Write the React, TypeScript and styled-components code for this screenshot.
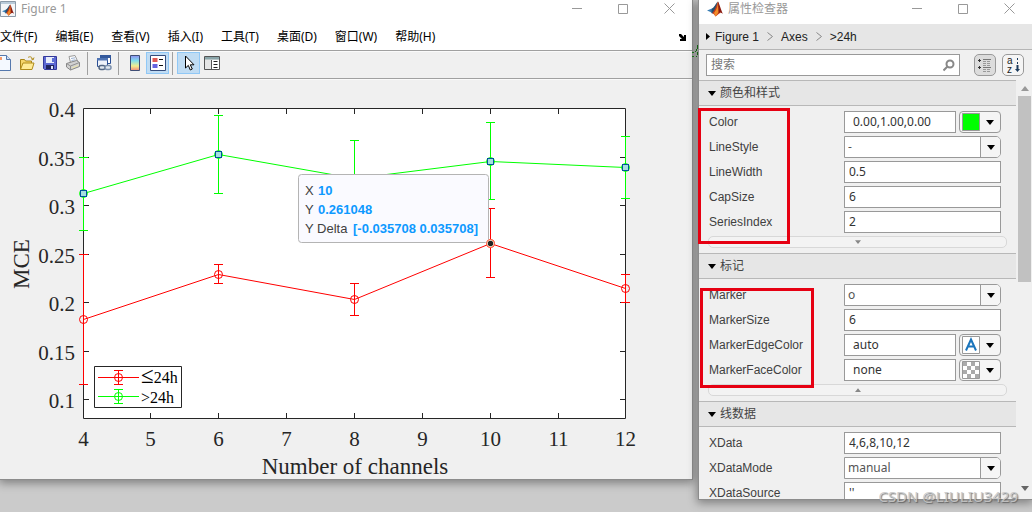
import React from "react";
import styled, { createGlobalStyle } from "styled-components";

const sans = `"Noto Sans", "Noto Sans CJK SC", sans-serif`;
const arial = `"Liberation Sans", "Noto Sans CJK SC", sans-serif`;
const serif = `"Liberation Serif", serif`;

const GlobalStyle = createGlobalStyle`
  * { box-sizing: border-box; }
  body { margin: 0; background: #cbcbcb; overflow: hidden; }
  button, input, select { margin: 0; padding: 0; font: inherit; color: inherit; }
  svg { display: block; }
`;

const Desktop = styled.div`
  position: relative;
  display: flex;
  align-items: flex-start;
  gap: 5px;
  min-height: 100vh;
  overflow: hidden;
  font: 12px/16px ${sans};
  color: #000;
`;

const FigureWindow = styled.main`
  flex: 1;
  min-width: 0;
  background: #f0f0f0;
  border: solid #8c8c8c;
  border-width: 0 1px 1px 0;
  box-shadow: 0 2px 9px 1px rgba(0, 0, 0, 0.38);
`;

const InspectorWindow = styled.aside`
  position: relative;
  flex: none;
  width: 334px;
  height: calc(100vh - 12px);
  display: flex;
  flex-direction: column;
  background: #f0f0f0;
  border: solid #8c8c8c;
  border-width: 0 0 1px 1px;
  box-shadow: 0 2px 9px 1px rgba(0, 0, 0, 0.38);
`;

const TitleBar = styled.header<{ $indent: number }>`
  flex: none;
  display: flex;
  align-items: center;
  gap: 5px;
  height: 24px;
  padding: 0 0 7px ${(p) => p.$indent}px;
  background: #fff;
  color: #999;
`;

const Title = styled.h1`
  flex: 1;
  margin: 0;
  font-size: 12px;
  font-weight: 400;
`;

const WindowButton = styled.button`
  display: grid;
  place-items: center;
  width: 46px;
  height: 17px;
  margin-left: -5px;
  border: 0;
  background: none;
`;

const MenuBar = styled.nav`
  display: flex;
  align-items: center;
  gap: 18px;
  height: 27px;
  background: #fff;
  border-bottom: 1px solid #a0a0a0;
`;

const MenuItem = styled.button`
  border: 0;
  background: none;
  white-space: nowrap;
`;

const DockButton = styled.button`
  margin: 0 5px 0 auto;
  border: 0;
  background: none;
`;

const Toolbar = styled.div`
  display: flex;
  height: 28px;
  padding: 1px 0 3px;
  border-bottom: 1px solid #a0a0a0;
  box-shadow: inset 0 1px #fafafa, 0 1px #fafafa;
`;

const ToolGroup = styled.div`
  display: flex;
  &:first-child { margin-left: -8px; }
  & + & { margin-left: 3px; padding-left: 4px; border-left: 1px solid #a0a0a0; }
`;

const ToolButton = styled.button<{ $on?: boolean }>`
  display: grid;
  place-items: center;
  width: 23px;
  height: 22px;
  border: 1px solid ${(p) => (p.$on ? "#90c8f6" : "transparent")};
  background: ${(p) => (p.$on ? "#c0dcf3" : "none")};
`;

const Plot = styled.svg`
  width: 100%;
  height: auto;
`;

const Breadcrumb = styled.nav`
  flex: none;
  display: flex;
  align-items: center;
  gap: 8px;
  height: 26px;
  padding-left: 7px;
  background: #e6e6e6;
  border-bottom: 1px solid #b5b5b5;
  font-family: ${arial};
`;

const Crumb = styled.a`
  color: #222;
  text-decoration: none;
  &:first-of-type { margin-left: -3px; }
`;

const SearchRow = styled.div`
  flex: none;
  display: flex;
  gap: 6px;
  padding: 4px 8px 4px 7px;
`;

const SearchBox = styled.label`
  flex: 1;
  display: flex;
  align-items: center;
  height: 22px;
  margin-right: 8px;
  padding: 0 4px;
  background: #fff;
  border: 1px solid #999;
`;

const SearchInput = styled.input`
  flex: 1;
  min-width: 0;
  border: 0;
  outline: 0;
  background: none;
  color: #444;
  &::placeholder { color: #777; opacity: 1; }
`;

const ModeButton = styled.button<{ $on?: boolean }>`
  display: grid;
  place-items: center;
  width: 22px;
  height: 22px;
  border: 1px solid #999;
  border-radius: 5px;
  background: ${(p) => (p.$on ? "#dcdcdc" : "#f5f5f5")};
`;

const Body = styled.div`
  flex: 1;
  min-height: 0;
  display: flex;
`;

const Sections = styled.div`
  flex: 1;
  overflow: hidden;
`;

const SectionHead = styled.h2`
  display: flex;
  align-items: center;
  gap: 4px;
  height: 26px;
  margin: 0;
  padding-left: 9px;
  border: solid #b8b8b8;
  border-width: 1px 0;
  background: #e6e6e6;
  color: #444;
  font-size: 12px;
  font-weight: 400;
`;

const Rows = styled.div`
  display: flex;
  flex-direction: column;
  gap: 3px;
  padding: 5px 9px;
`;

const Row = styled.div`
  display: flex;
  align-items: center;
  height: 22px;
  padding-right: 6px;
`;

const RowLabel = styled.label`
  flex: 1;
  padding-left: 1px;
  font-family: ${arial};
  color: #404040;
`;

const Field = styled.div`
  position: relative;
  display: flex;
  gap: 3px;
  width: 157px;
  height: 22px;
`;

const ValueInput = styled.input<{ $inset?: boolean }>`
  flex: 1;
  min-width: 0;
  padding: 0 ${(p) => (p.$inset ? 8 : 4)}px;
  border: 1px solid #999;
  background: #fff;
  color: #333;
`;

const ValueSelect = styled.select`
  flex: 1;
  appearance: none;
  padding: 0 24px 0 3px;
  border: 1px solid #999;
  border-radius: 0 5px 5px 0;
  background: #fff;
  color: #555;
`;

const SelectArrow = styled.span`
  position: absolute;
  top: 1px;
  right: 1px;
  bottom: 1px;
  display: grid;
  place-items: center;
  width: 20px;
  border-left: 1px solid #999;
  border-radius: 0 4px 4px 0;
  background: #f5f5f5;
  pointer-events: none;
`;

const SwatchButton = styled.button`
  display: flex;
  align-items: center;
  gap: 6px;
  width: 42px;
  padding-left: 2px;
  border: 1px solid #999;
  border-radius: 4px;
  background: #f5f5f5;
`;

const Expander = styled.button`
  display: grid;
  place-items: center;
  height: 12px;
  border: 1px solid #d8d8d8;
  border-radius: 5px;
  background: #f3f3f3;
`;

const ScrollTrack = styled.div`
  flex: none;
  display: flex;
  flex-direction: column;
  align-items: center;
  width: 16px;
  padding: 6px 1px 8px 2px;
  background: #f0f0f0;
`;

const ScrollThumb = styled.div`
  width: 13px;
  height: 46%;
  margin: 5px 0 auto;
  background: #c1c1c1;
`;

const Highlight = styled.div<{ $x: number; $y: number; $w: number; $h: number }>`
  position: absolute;
  left: ${(p) => p.$x}px;
  top: ${(p) => p.$y}px;
  width: ${(p) => p.$w}px;
  height: ${(p) => p.$h}px;
  border: 3px solid #e60012;
  pointer-events: none;
`;

const Watermark = styled.div`
  position: absolute;
  right: 14px;
  bottom: 5px;
  font-size: 15px;
  line-height: 22px;
  color: rgba(200, 200, 200, 0.9);
  text-shadow: 1px 1px 1px rgba(90, 90, 90, 0.8);
  pointer-events: none;
`;

const BackgroundMark = styled.svg`
  position: absolute;
  right: 334px;
  top: 44px;
`;

const Caret = ({ color = "#000", up = false, w = 8 }) => (
  <svg width={w} height={w / 2 + 1} viewBox="0 0 8 5">
    <path d={up ? "M0 5h8L4 0z" : "M0 0h8L4 5z"} fill={color} />
  </svg>
);

const MatlabMark = () => (
  <>
    <path d="M0 9.5 5 7.5 7.5 9.5 5 12.5 3.5 11z" fill="#3b7fb5" />
    <path d="M5 7.5C7.500 6.500 8.500 2.500 11 .5L8.500 10 5 12.500 4.500 10z" fill="#25506f" />
    <path d="M11 .5C9 5 8 9 5 12.500 6.500 12 7.500 14 8.500 15.500 10.500 14.500 11.500 12 13.500 12Z" fill="#c3391b" />
    <path d="M11 .5C12.500 3 14 9 16 13 14 11.500 12.500 11 11 12.500z" fill="#8b1c12" />
    <path d="M11 .5C11 5 9.500 9 7 12L8.500 15.500C10 14 10.500 12 11.500 11.500Z" fill="#f28c28" />
  </>
);

const WindowControls = () => (
  <>
    <WindowButton aria-label="最小化">
      <svg width="10" height="11"><path d="M0 5.500h10" stroke="#999" /></svg>
    </WindowButton>
    <WindowButton aria-label="最大化">
      <svg width="10" height="10"><path d="M.5.5h9v9h-9z" stroke="#999" fill="none" /></svg>
    </WindowButton>
    <WindowButton aria-label="关闭">
      <svg width="11" height="11"><path d="M.5.5l10 10M10.500.5l-10 10" stroke="#999" /></svg>
    </WindowButton>
  </>
);

const menus = ["文件(F)", "编辑(E)", "查看(V)", "插入(I)", "工具(T)", "桌面(D)", "窗口(W)", "帮助(H)"];

const tools: { name: string; on?: boolean; icon: React.ReactNode }[][] = [
  [
    {
      name: "新建",
      icon: (
        <>
          <path d="M1.500.5h9l4 4v11h-13z" fill="#f4f9ff" stroke="#5578ad" />
          <path d="M10.500.5v4h4" fill="#cfdff4" stroke="#5578ad" />
          <path d="M2 2h4v3H2z" fill="#f49a6a" />
        </>
      ),
    },
    {
      name: "打开",
      icon: (
        <>
          <path d="M1.500 14.500v-10h4l1 1.500h6v3" fill="#f6d66b" stroke="#a98416" />
          <path d="M1.500 14.500l2.500-6.500h11l-2 6.500z" fill="#ffeb96" stroke="#b08c1b" />
          <path d="M9 2.500c2-1.500 4-.5 4.500 1.500M12 3.500l2 1.500 1-2.500" fill="none" stroke="#b08c1b" />
        </>
      ),
    },
    {
      name: "保存",
      icon: (
        <>
          <path d="M1.500 1.500h13v13h-12l-1-1z" fill="#5c68d2" stroke="#34399a" />
          <path d="M4 2h8v6H4z" fill="#e8edfb" />
          <path d="M10 3h2v4h-2z" fill="#5c6fd3" />
          <path d="M4 10h8v4H4z" fill="#20245c" />
          <path d="M9 11h2v3H9z" fill="#dfe5fa" />
        </>
      ),
    },
    {
      name: "打印",
      icon: (
        <>
          <path d="M5.500 7.500L4 1.500l6-1 2.500 5.500z" fill="#fff" stroke="#999" />
          <path d="M6 3.500l4-.7M6.500 5.500l4-.7" stroke="#9bb1d1" />
          <path d="M1.500 8.500l10-3 3 2v4l-9 3.500-4-3z" fill="#d2d2d2" stroke="#888" />
          <path d="M1.500 8.500l4 2.500 9-3.500M5.500 11v4" fill="none" stroke="#909090" />
          <path d="M7 13l6-2.500" stroke="#eee7a8" />
        </>
      ),
    },
  ],
  [
    {
      name: "链接绘图",
      icon: (
        <>
          <path d="M4.500.5h10v8h-10z" fill="#fff" stroke="#2a4f94" />
          <path d="M4 0h11v3H4z" fill="#34599c" />
          <path d="M1.500 3.500h10v8h-10z" fill="#eef2fa" stroke="#2a4f94" />
          <path d="M1 3h11v2.500H1z" fill="#5075b5" />
          <rect x="3" y="10.500" width="6" height="4" rx="2" fill="#dfe6ef" stroke="#536784" strokeWidth="1.500" />
          <rect x="9" y="10.500" width="6" height="4" rx="2" fill="#dfe6ef" stroke="#7e92ae" strokeWidth="1.500" />
        </>
      ),
    },
  ],
  [
    {
      name: "插入颜色栏",
      icon: (
        <>
          <defs>
            <linearGradient id="bar" x1="0" y1="0" x2="0" y2="1">
              <stop offset="0" stopColor="#8f8df0" />
              <stop offset=".35" stopColor="#7fe0ee" />
              <stop offset=".7" stopColor="#f3ef8e" />
              <stop offset="1" stopColor="#f08a7c" />
            </linearGradient>
          </defs>
          <path d="M3.500.5h9v15h-9z" fill="url(#bar)" stroke="#3f4f76" />
        </>
      ),
    },
    {
      name: "插入图例",
      on: true,
      icon: (
        <>
          <path d="M.5.5h15v15H.5z" fill="#fff" stroke="#344c7c" />
          <path d="M2.500 3h5v4h-5z" fill="#e05a55" />
          <path d="M2.500 9h5v4h-5z" fill="#6663e0" />
          <path d="M9 4.500h4M9 10.500h4" stroke="#111" />
        </>
      ),
    },
  ],
  [
    {
      name: "编辑绘图",
      on: true,
      icon: <path d="M4.500 1v12l2.800-2.600 2 4.600 2-1-2-4.200h3.700z" fill="#fff" stroke="#000" />,
    },
    {
      name: "属性检查器",
      icon: (
        <>
          <path d="M.5 1.500h15v13H.5z" fill="#e6e6e6" stroke="#555" />
          <path d="M1 2h14v2.500H1z" fill="#8aa5a9" />
          <path d="M7.500 5v9" stroke="#555" />
          <path d="M8 5h7v9H8z" fill="#fff" />
          <path d="M9.500 6.500h4M9.500 9.500h4M9.500 12.500h4" stroke="#222" />
        </>
      ),
    },
  ],
];

type Sample = { x: number; y: number; lo: number; hi: number };

const longSeries: Sample[] = [
  { x: 4, y: 0.3124, lo: 0.2745, hi: 0.3498 },
  { x: 6, y: 0.3528, lo: 0.3124, hi: 0.3928 },
  { x: 8, y: 0.328, lo: 0.289, hi: 0.367 },
  { x: 10, y: 0.3454, lo: 0.3065, hi: 0.3856 },
  { x: 12, y: 0.3392, lo: 0.3075, hi: 0.3711 },
];

const shortSeries: Sample[] = [
  { x: 4, y: 0.1825, lo: 0.1158, hi: 0.2497 },
  { x: 6, y: 0.2289, lo: 0.2196, hi: 0.2392 },
  { x: 8, y: 0.2031, lo: 0.187, hi: 0.2196 },
  { x: 10, y: 0.261, lo: 0.2253, hi: 0.2968 },
  { x: 12, y: 0.2144, lo: 0.2, hi: 0.2292 },
];

const frame = { left: 83.5, right: 625.5, top: 29.5, bottom: 339.5 };
const snap = (n: number) => Math.floor(n) + 0.5;
const px = (v: number) => snap(83 + (v - 4) * 67.86);
const py = (v: number) => snap(29.5 + (0.4 - v) * 970);

const ErrorSeries = ({ data, color }: { data: Sample[]; color: string }) => (
  <g stroke={color} fill="none">
    <polyline points={data.map((d) => `${px(d.x)},${py(d.y)}`).join(" ")} />
    {data.map((d) => (
      <g key={d.x}>
        <path
          d={`M${px(d.x)} ${py(d.lo)}V${py(d.hi)}M${px(d.x) - 4.5} ${py(d.lo)}h9M${px(d.x) - 4.5} ${py(d.hi)}h9`}
        />
        <circle cx={px(d.x)} cy={py(d.y)} r="4" />
      </g>
    ))}
  </g>
);

const LegendKey = ({ y, color }: { y: number; color: string }) => (
  <g stroke={color} fill="none">
    <path d={`M98 ${y}h41M118.500 ${y - 7}v14M114 ${y - 7}h9M114 ${y + 7}h9`} />
    <circle cx="118.500" cy={y} r="4" />
  </g>
);

const Chart = () => {
  const xs = [4, 5, 6, 7, 8, 9, 10, 11, 12];
  const ys = [0.4, 0.35, 0.3, 0.25, 0.2, 0.15, 0.1];
  return (
    <Plot viewBox="0 0 692 400" role="img" aria-label="MCE / Number of channels">
      <path d="M83 29h543v311H83z" fill="#fff" />
      <g stroke="#262626" fill="none">
        <path d={`M${frame.left} ${frame.top}H${frame.right}V${frame.bottom}H${frame.left}z`} />
        {xs.slice(1, -1).map((v) => (
          <path key={v} d={`M${px(v)} 29v6M${px(v)} 340v-6`} />
        ))}
        {ys.slice(1).map((v) => (
          <path key={v} d={`M83 ${py(v)}h6M626 ${py(v)}h-6`} />
        ))}
      </g>
      <g fontFamily={serif} fontSize="21" fill="#262626">
        {xs.map((v) => (
          <text key={v} x={px(v)} y="367" textAnchor="middle">{v}</text>
        ))}
        {ys.map((v) => (
          <text key={v} x="75" y={py(v) + 8} textAnchor="end">{v}</text>
        ))}
        <text x="355" y="395" fontSize="23" textAnchor="middle">Number of channels</text>
        <text transform="translate(29 185) rotate(-90)" fontSize="23" textAnchor="middle">MCE</text>
      </g>

      <ErrorSeries data={longSeries} color="#00ff00" />
      <ErrorSeries data={shortSeries} color="#ff0000" />
      {longSeries.map((d) => (
        <rect key={d.x} x={px(d.x) - 3} y={py(d.y) - 3} width="6" height="6" fill="#a5dfe0" stroke="#00559b" />
      ))}

      <path d="M94.500 287.500h87v41h-87z" fill="#fff" stroke="#262626" />
      <LegendKey y={298.5} color="#ff0000" />
      <LegendKey y={317.5} color="#00ff00" />
      <g fontFamily={serif} fontSize="16" fill="#000">
        <text x="141" y="304"><tspan fontSize="23">≤</tspan>24h</text>
        <text x="141" y="324">&gt;24h</text>
      </g>

      <rect x="298.500" y="95.500" width="190" height="68" rx="3" fill="#fafaff" stroke="#b4b4b4" />
      <g fontFamily={arial} fontSize="13" fill="#404040">
        <text x="305" y="116">X <tspan x="318" fontWeight="700" fill="#0d99ff">10</tspan></text>
        <text x="305" y="135">Y <tspan x="318" fontWeight="700" fill="#0d99ff">0.261048</tspan></text>
        <text x="305" y="154">Y Delta <tspan x="353" fontWeight="700" fill="#0d99ff">[-0.035708 0.035708]</tspan></text>
      </g>
      <circle cx="490.500" cy="164.500" r="4" fill="#fff8e0" stroke="#ff5a3c" />
      <circle cx="490.500" cy="164.500" r="2.700" fill="#222" />
    </Plot>
  );
};

type Kind = "text" | "select" | "color";
type Prop = { name: string; value: string; kind: Kind; swatch?: React.ReactNode };

const box = <path d="M.5.5h17v17H.5z" fill="#fff" stroke="#999" />;

const sections: { title: string; props: Prop[]; more?: "down" | "up" }[] = [
  {
    title: "颜色和样式",
    more: "down",
    props: [
      { name: "Color", value: "0.00,1.00,0.00", kind: "color", swatch: <path d="M.5.5h17v17H.5z" fill="#0f0" stroke="#999" /> },
      { name: "LineStyle", value: "-", kind: "select" },
      { name: "LineWidth", value: "0.5", kind: "text" },
      { name: "CapSize", value: "6", kind: "text" },
      { name: "SeriesIndex", value: "2", kind: "text" },
    ],
  },
  {
    title: "标记",
    more: "up",
    props: [
      { name: "Marker", value: "o", kind: "select" },
      { name: "MarkerSize", value: "6", kind: "text" },
      {
        name: "MarkerEdgeColor",
        value: "auto",
        kind: "color",
        swatch: <>{box}<path d="M4 14.500L9 3.500l5 11M5.500 10.500h7" fill="none" stroke="#1b75bc" strokeWidth="2" /></>,
      },
      {
        name: "MarkerFaceColor",
        value: "none",
        kind: "color",
        swatch: (
          <>
            {box}
            <path d="M1 1h4v4H1zM9 1h4v4H9zM5 5h4v4H5zM13 5h4v4h-4zM1 9h4v4H1zM9 9h4v4H9zM5 13h4v4H5zM13 13h4v4h-4z" fill="#aaa" />
          </>
        ),
      },
    ],
  },
  {
    title: "线数据",
    props: [
      { name: "XData", value: "4,6,8,10,12", kind: "text" },
      { name: "XDataMode", value: "manual", kind: "select" },
      { name: "XDataSource", value: "''", kind: "text" },
    ],
  },
];

const PropertyRow = ({ name, value, kind, swatch }: Prop) => (
  <Row>
    <RowLabel htmlFor={name}>{name}</RowLabel>
    <Field>
      {kind === "select" ? (
        <>
          <ValueSelect id={name} defaultValue={value}>
            <option>{value}</option>
          </ValueSelect>
          <SelectArrow><Caret /></SelectArrow>
        </>
      ) : (
        <ValueInput id={name} defaultValue={value} $inset={kind === "color"} />
      )}
      {kind === "color" && (
        <SwatchButton aria-label={name}>
          <svg width="18" height="18">{swatch}</svg>
          <Caret />
        </SwatchButton>
      )}
    </Field>
  </Row>
);

const Chevron = () => (
  <svg width="6" height="9"><path d="M.5.5l5 4-5 4" fill="none" stroke="#888" /></svg>
);

export default function App() {
  return (
    <Desktop>
      <GlobalStyle />
      <FigureWindow>
        <TitleBar $indent={0}>
          <svg width="16" height="16" viewBox="0 0 16 16">
            <path d="M.5.5h15v15H.5z" fill="#f4f6f8" stroke="#8b9aa8" />
            <path d="M1 1h14v2H1z" fill="#b9cbd9" />
            <g transform="translate(2 3) scale(.75)"><MatlabMark /></g>
          </svg>
          <Title>Figure 1</Title>
          <WindowControls />
        </TitleBar>
        <MenuBar>
          {menus.map((m) => <MenuItem key={m}>{m}</MenuItem>)}
          <DockButton aria-label="停靠">
            <svg width="8" height="7"><path d="M0 0h2l3 3V1h2v6H1V5h2L0 2z" fill="#000" /></svg>
          </DockButton>
        </MenuBar>
        <Toolbar>
          {tools.map((group, i) => (
            <ToolGroup key={i}>
              {group.map((t) => (
                <ToolButton key={t.name} $on={t.on} aria-label={t.name}>
                  <svg width="16" height="16">{t.icon}</svg>
                </ToolButton>
              ))}
            </ToolGroup>
          ))}
        </Toolbar>
        <Chart />
      </FigureWindow>

      <BackgroundMark width="6" height="14">
        <path d="M0 8.500h2M0 12.500h2M5.500 1v4M4.500 5v2M3.500 7v1M5.500 8v3M4.500 12v1" stroke="#187a18" fill="none" />
      </BackgroundMark>

      <InspectorWindow>
        <TitleBar $indent={8}>
          <svg width="16" height="16" viewBox="0 0 16 16"><MatlabMark /></svg>
          <Title>属性检查器</Title>
          <WindowControls />
        </TitleBar>
        <Breadcrumb>
          <svg width="4" height="7"><path d="M0 0v7l4-3.500z" /></svg>
          <Crumb href="#figure">Figure 1</Crumb>
          <Chevron />
          <Crumb href="#axes">Axes</Crumb>
          <Chevron />
          <Crumb href="#series">&gt;24h</Crumb>
        </Breadcrumb>
        <SearchRow>
          <SearchBox>
            <SearchInput placeholder="搜索" aria-label="搜索" />
            <svg width="12" height="13"><circle cx="7" cy="5" r="3.500" fill="none" stroke="#888" strokeWidth="2" /><path d="M4.500 7.500l-4 4" stroke="#888" strokeWidth="2" /></svg>
          </SearchBox>
          <ModeButton $on aria-label="分组">
            <svg width="14" height="14">
              <path d="M0 2.500h3M1.500 1v3M0 9.500h3M1.500 8v3" stroke="#333" />
              <path d="M5 1.500h8M5 9.500h8" stroke="#777" />
              <path d="M5 3.500h8M5 5.500h8M5 11.500h8M5 13.500h8M5 7.500h8" stroke="#999" strokeDasharray="3 1" />
            </svg>
          </ModeButton>
          <ModeButton aria-label="按字母排序">
            <svg width="18" height="20">
              <g fontFamily={arial} fontSize="10" fill="#222"><text x="3" y="9">a</text><text x="3" y="18">z</text></g>
              <path d="M13.500 3v2M13.500 7v2" stroke="#1a3a5c" />
              <path d="M13.500 10v5" stroke="#1a3a5c" strokeWidth="2" />
              <path d="M11 14h5l-2.500 3z" fill="#1a3a5c" />
            </svg>
          </ModeButton>
        </SearchRow>
        <Body>
          <Sections>
            {sections.map((s) => (
              <section key={s.title}>
                <SectionHead><Caret />{s.title}</SectionHead>
                <Rows>
                  {s.props.map((p) => <PropertyRow key={p.name} {...p} />)}
                  {s.more && (
                    <Expander aria-label={s.title}><Caret color="#888" w={6} up={s.more === "up"} /></Expander>
                  )}
                </Rows>
              </section>
            ))}
          </Sections>
          <ScrollTrack>
            <Caret color="#999" up />
            <ScrollThumb />
            <Caret color="#666" />
          </ScrollTrack>
        </Body>
        <Highlight $x={-1} $y={108} $w={92} $h={136} />
        <Highlight $x={1} $y={288} $w={114} $h={100} />
      </InspectorWindow>
      <Watermark>CSDN @LIULIU3429</Watermark>
    </Desktop>
  );
}
